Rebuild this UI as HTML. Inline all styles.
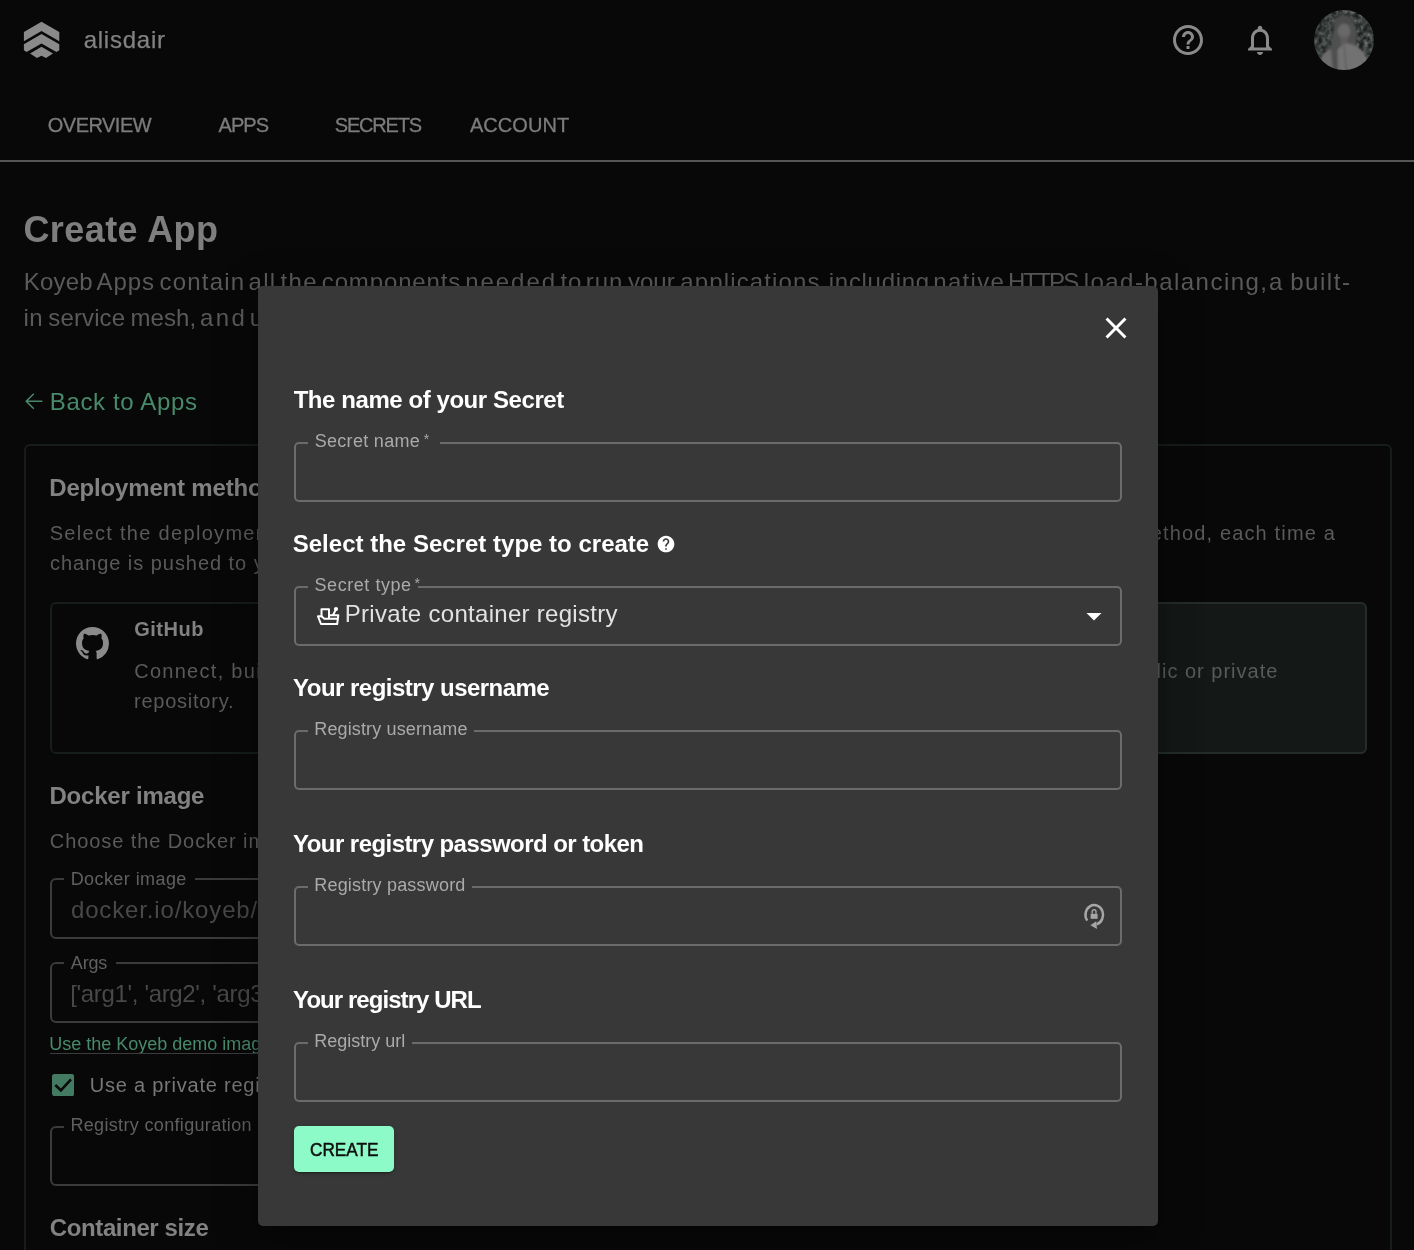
<!DOCTYPE html>
<html><head><meta charset="utf-8"><title>Create App</title>
<style>
html,body{margin:0;padding:0;}
body{width:1414px;height:1250px;overflow:hidden;background:#080808;font-family:"Liberation Sans",sans-serif;position:relative;}
#w{position:absolute;left:0;top:0;width:1414px;height:1250px;overflow:hidden;will-change:transform;}
.a{position:absolute;display:block;}
.t{position:absolute;white-space:nowrap;line-height:1;}
</style></head><body><div id="w">
<svg class="a" style="left:20px;top:18px" width="44" height="44" viewBox="20 18 44 44">
<g fill="#8a8a8a">
<path d="M41.5 21.8 L59.3 31.9 V41.2 L41.5 31 L23.9 41.2 V31.9 Z"/>
<path d="M41.5 34 L59.3 44.2 V50.3 L56.4 52 L41.5 43.4 L26.6 52 L23.9 50.3 V44.2 Z"/>
<path d="M41.5 46.7 L53 53.4 L46 58.1 L41.5 55.7 L36.9 58.1 L30.1 53.4 Z"/>
</g></svg>
<div class="t" style="left:83.68px;top:28px;font-size:24px;color:#828282;letter-spacing:0.760px;-webkit-text-stroke:0.25px #828282;">alisdair</div>
<div class="t" style="left:47.82px;top:115px;font-size:20px;color:#7c7c7c;letter-spacing:-0.525px;-webkit-text-stroke:0.3px #7c7c7c;">OVERVIEW</div>
<div class="t" style="left:218.50px;top:115px;font-size:20px;color:#7c7c7c;letter-spacing:-0.925px;-webkit-text-stroke:0.3px #7c7c7c;">APPS</div>
<div class="t" style="left:334.86px;top:115px;font-size:20px;color:#7c7c7c;letter-spacing:-1.212px;-webkit-text-stroke:0.3px #7c7c7c;">SECRETS</div>
<div class="t" style="left:469.96px;top:115px;font-size:20px;color:#7c7c7c;letter-spacing:0.059px;-webkit-text-stroke:0.3px #7c7c7c;">ACCOUNT</div>
<div class="a" style="left:0;top:160px;width:1414px;height:2px;background:#565656"></div>
<svg class="a" style="left:1170px;top:22px" width="36" height="36" viewBox="0 0 24 24"><path fill="#8a8a8a" d="M11 18h2v-2h-2v2zm1-16C6.48 2 2 6.48 2 12s4.48 10 10 10 10-4.48 10-10S17.52 2 12 2zm0 18c-4.41 0-8-3.59-8-8s3.59-8 8-8 8 3.59 8 8-3.59 8-8 8zm0-14c-2.21 0-4 1.79-4 4h2c0-1.1.9-2 2-2s2 .9 2 2c0 2-3 1.75-3 5h2c0-2.25 3-2.5 3-5 0-2.21-1.79-4-4-4z"/></svg>
<svg class="a" style="left:1242px;top:22px" width="36" height="36" viewBox="0 0 24 24"><path fill="#8a8a8a" d="M12 22c1.1 0 2-.9 2-2h-4c0 1.1.9 2 2 2zm6-6v-5c0-3.07-1.63-5.64-4.5-6.32V4c0-.83-.67-1.5-1.5-1.5s-1.5.67-1.5 1.5v.68C7.64 5.36 6 7.92 6 11v5l-2 2v1h16v-1l-2-2zm-2 1H8v-6c0-2.48 1.51-4.5 4-4.5s4 2.02 4 4.5v6z"/></svg>
<svg class="a" style="left:1314px;top:10px" width="60" height="60" viewBox="0 0 60 60">
<defs><clipPath id="avc"><circle cx="30" cy="30" r="30"/></clipPath><filter id="avb" x="-10%" y="-10%" width="120%" height="120%"><feGaussianBlur stdDeviation="0.8"/></filter>
<filter id="avn" x="0" y="0" width="100%" height="100%"><feTurbulence type="fractalNoise" baseFrequency="0.22" numOctaves="2" seed="7"/><feColorMatrix type="matrix" values="0 0 0 0 0.24  0 0 0 0 0.26  0 0 0 0 0.25  0.9 0.9 0 0 -0.62"/></filter></defs>
<g clip-path="url(#avc)"><rect width="60" height="60" fill="#1b1f1e"/>
<rect width="60" height="60" filter="url(#avn)"/>
<g filter="url(#avb)">
<ellipse cx="30" cy="16.5" rx="10.5" ry="11.5" fill="#4c4c4c"/>
<path d="M20 18 C17 30 15 44 17 62 L44 62 L42 30 C44 24 42 16 40 14 Z" fill="#4f4f4f"/>
<ellipse cx="30" cy="21" rx="6.4" ry="7.4" fill="#676767"/>
<rect x="26.5" y="27" width="7.5" height="8" fill="#5c5c5c"/>
<path d="M5 62 C5 48 9 41 17 39 L19 62 Z" fill="#6c6c6c"/>
<path d="M24 62 L23.5 40 C27 35 30 34 34 33.5 C44 35 52 42 55 54 L55 62 Z" fill="#727272"/>
<path d="M30 36 L32.5 62" stroke="#5a5a5a" stroke-width="1.2" fill="none"/>
</g></g></svg>
<div class="t" style="left:23.38px;top:212px;font-size:36px;color:#7e7e7e;letter-spacing:0.436px;font-weight:700;">Create App</div>
<div class="t" style="left:23.84px;top:270px;font-size:24px;color:#5a5a5a;letter-spacing:0.158px;">Koyeb</div>
<div class="t" style="left:96.55px;top:270px;font-size:24px;color:#5a5a5a;letter-spacing:0.916px;">Apps</div>
<div class="t" style="left:159.43px;top:270px;font-size:24px;color:#5a5a5a;letter-spacing:1.215px;">contain</div>
<div class="t" style="left:248.57px;top:270px;font-size:24px;color:#5a5a5a;letter-spacing:1.289px;">all</div>
<div class="t" style="left:280.54px;top:270px;font-size:24px;color:#5a5a5a;letter-spacing:1.362px;">the</div>
<div class="t" style="left:321.80px;top:270px;font-size:24px;color:#5a5a5a;letter-spacing:0.864px;">components</div>
<div class="t" style="left:465.16px;top:270px;font-size:24px;color:#5a5a5a;letter-spacing:1.973px;">needed</div>
<div class="t" style="left:560.54px;top:270px;font-size:24px;color:#5a5a5a;letter-spacing:0.727px;">to</div>
<div class="t" style="left:585.87px;top:270px;font-size:24px;color:#5a5a5a;letter-spacing:0.891px;">run</div>
<div class="t" style="left:627.90px;top:270px;font-size:24px;color:#5a5a5a;letter-spacing:0.042px;">your</div>
<div class="t" style="left:680.36px;top:270px;font-size:24px;color:#5a5a5a;letter-spacing:1.119px;">applications,</div>
<div class="t" style="left:828.82px;top:270px;font-size:24px;color:#5a5a5a;letter-spacing:0.693px;">including</div>
<div class="t" style="left:933.29px;top:270px;font-size:24px;color:#5a5a5a;letter-spacing:1.300px;">native</div>
<div class="t" style="left:1008.00px;top:270px;font-size:24px;color:#5a5a5a;letter-spacing:-1.881px;">HTTPS</div>
<div class="t" style="left:1083.65px;top:270px;font-size:24px;color:#5a5a5a;letter-spacing:1.470px;">load-balancing,</div>
<div class="t" style="left:1268.90px;top:270px;font-size:24px;color:#5a5a5a;">a</div>
<div class="t" style="left:1290.13px;top:270px;font-size:24px;color:#5a5a5a;letter-spacing:1.569px;">built-</div>
<div class="t" style="left:23.48px;top:306px;font-size:24px;color:#5a5a5a;letter-spacing:0.381px;">in</div>
<div class="t" style="left:48.36px;top:306px;font-size:24px;color:#5a5a5a;letter-spacing:0.115px;">service</div>
<div class="t" style="left:130.49px;top:306px;font-size:24px;color:#5a5a5a;letter-spacing:0.056px;">mesh,</div>
<div class="t" style="left:200.11px;top:306px;font-size:24px;color:#5a5a5a;letter-spacing:2.399px;">and</div>
<div class="t" style="left:249.83px;top:306px;font-size:24px;color:#5a5a5a;letter-spacing:0.500px;">up to date</div>
<svg class="a" style="left:24px;top:391px" width="20" height="20" viewBox="0 0 20 20"><path d="M18.4 10.2 H2.2 M9.8 2.8 L2.2 10.2 L9.8 17.8" fill="none" stroke="#488a6c" stroke-width="1.5"/></svg>
<div class="t" style="left:49.79px;top:390px;font-size:24px;color:#488a6c;letter-spacing:0.648px;">Back to Apps</div>
<div class="a" style="left:24px;top:444px;width:1368px;height:900px;border:2px solid #161c1a;border-radius:6px;box-sizing:border-box"></div>
<div class="t" style="left:49.27px;top:476px;font-size:24px;color:#828282;letter-spacing:-0.177px;font-weight:700;">Deployment method</div>
<div class="t" style="left:49.65px;top:523px;font-size:20px;color:#5a5a5a;letter-spacing:1.313px;">Select the deployment method</div>
<div class="t" style="left:50.00px;top:553px;font-size:20px;color:#5a5a5a;letter-spacing:0.956px;">change is pushed to your</div>
<div class="t" style="left:1219.90px;top:523px;font-size:20px;color:#5a5a5a;letter-spacing:1.158px;">each time a</div>
<div class="t" style="right:194.10px;top:523px;font-size:20px;color:#5a5a5a;letter-spacing:1.158px;">method, </div>
<div class="a" style="left:50px;top:602px;width:645px;height:152px;border:2px solid #161d1b;border-radius:6px;box-sizing:border-box"></div>
<div class="a" style="left:721px;top:602px;width:646px;height:152px;border:2px solid #242d2a;background:#141918;border-radius:6px;box-sizing:border-box"></div>
<svg class="a" style="left:75.5px;top:627.2px" width="33" height="33" viewBox="0 0 16 16"><path fill="#8a8a8a" d="M8 0C3.58 0 0 3.58 0 8c0 3.54 2.29 6.53 5.47 7.59.4.07.55-.17.55-.38 0-.19-.01-.82-.01-1.49-2.01.37-2.53-.49-2.69-.94-.09-.23-.48-.94-.82-1.13-.28-.15-.68-.52-.01-.53.63-.01 1.08.58 1.23.82.72 1.21 1.87.87 2.33.66.07-.52.28-.87.51-1.07-1.78-.2-3.64-.89-3.64-3.95 0-.87.31-1.59.82-2.15-.08-.2-.36-1.02.08-2.12 0 0 .67-.21 2.2.82.64-.18 1.32-.27 2-.27s1.36.09 2 .27c1.53-1.04 2.2-.82 2.2-.82.44 1.1.16 1.92.08 2.12.51.56.82 1.27.82 2.15 0 3.07-1.87 3.75-3.65 3.95.29.25.54.73.54 1.48 0 1.07-.01 1.93-.01 2.2 0 .21.15.46.55.38A8.01 8.01 0 0 0 16 8c0-4.42-3.58-8-8-8z"/></svg>
<div class="t" style="left:134.28px;top:619px;font-size:20px;color:#828282;letter-spacing:0.496px;font-weight:700;">GitHub</div>
<div class="t" style="left:134.16px;top:661px;font-size:20px;color:#5a5a5a;letter-spacing:1.284px;">Connect, build</div>
<div class="t" style="left:133.96px;top:691px;font-size:20px;color:#5a5a5a;letter-spacing:0.770px;">repository.</div>
<div class="t" style="left:1184.97px;top:661px;font-size:20px;color:#5a5a5a;letter-spacing:1.006px;">or private</div>
<div class="t" style="right:229.03px;top:661px;font-size:20px;color:#5a5a5a;letter-spacing:1.006px;">public </div>
<div class="t" style="left:49.49px;top:784px;font-size:24px;color:#828282;letter-spacing:-0.220px;font-weight:700;">Docker image</div>
<div class="t" style="left:49.77px;top:831px;font-size:20px;color:#5a5a5a;letter-spacing:0.922px;">Choose the Docker image</div>
<div class="a" style="left:50px;top:878px;width:500px;height:61px;border:2px solid #393c3a;border-radius:6px;box-sizing:border-box"></div>
<div class="a" style="left:64px;top:878px;width:130.5px;height:2px;background:#080808"></div>
<div class="t" style="left:70.70px;top:870px;font-size:18px;color:#606060;letter-spacing:0.418px;">Docker image</div>
<div class="t" style="left:70.96px;top:898px;font-size:24px;color:#484848;letter-spacing:0.854px;">docker.io/koyeb/demo</div>
<div class="a" style="left:50px;top:962px;width:500px;height:61px;border:2px solid #393c3a;border-radius:6px;box-sizing:border-box"></div>
<div class="a" style="left:64px;top:962px;width:51.6px;height:2px;background:#080808"></div>
<div class="t" style="left:70.81px;top:954px;font-size:18px;color:#606060;letter-spacing:-0.155px;">Args</div>
<div class="t" style="left:70.25px;top:982px;font-size:24px;color:#484848;letter-spacing:-0.336px;">[&#x27;arg1&#x27;, &#x27;arg2&#x27;, &#x27;arg3&#x27;]</div>
<div class="t" style="left:49.23px;top:1035px;font-size:18px;color:#488a6c;letter-spacing:0.002px;">Use the Koyeb demo image</div>
<div class="a" style="left:50px;top:1053px;width:220px;height:1px;background:#3c3c3c"></div>
<svg class="a" style="left:52px;top:1074px" width="22.2" height="22.2" viewBox="0 0 22.2 22.2"><rect width="22.2" height="22.2" rx="2.6" fill="#437a62"/><path d="M3.3 11 L8.9 16.3 L19 5.4" fill="none" stroke="#0b0b0b" stroke-width="2.6"/></svg>
<div class="t" style="left:89.70px;top:1075px;font-size:20px;color:#787878;letter-spacing:0.778px;">Use a private registry</div>
<div class="a" style="left:50px;top:1126px;width:500px;height:60px;border:2px solid #393c3a;border-radius:6px;box-sizing:border-box"></div>
<div class="a" style="left:64px;top:1126px;width:245.0px;height:2px;background:#080808"></div>
<div class="t" style="left:70.43px;top:1116px;font-size:18px;color:#606060;letter-spacing:0.335px;">Registry configuration secret</div>
<div class="t" style="left:49.78px;top:1216px;font-size:24px;color:#828282;letter-spacing:-0.383px;font-weight:700;">Container size</div>
<div class="a" style="left:258px;top:286px;width:900px;height:940px;background:#383838;border-radius:5px;box-shadow:0 11px 15px -7px rgba(0,0,0,0.2),0 24px 38px 3px rgba(0,0,0,0.14),0 9px 46px 8px rgba(0,0,0,0.12)"></div>
<svg class="a" style="left:1098px;top:310px" width="36" height="36" viewBox="0 0 24 24"><path fill="#fff" d="M19 6.41L17.59 5 12 10.59 6.41 5 5 6.41 10.59 12 5 17.59 6.41 19 12 13.41 17.59 19 19 17.59 13.41 12z"/></svg>
<div class="t" style="left:293.64px;top:388px;font-size:24px;color:#ffffff;letter-spacing:-0.432px;font-weight:700;">The name of your Secret</div>
<div class="a" style="left:294px;top:442px;width:828px;height:60px;border:2px solid #6b6b6b;border-radius:5px;box-sizing:border-box"></div>
<div class="a" style="left:308px;top:442px;width:132.0px;height:2px;background:#383838"></div>
<div class="t" style="left:314.63px;top:432px;font-size:18px;color:#aaaaaa;letter-spacing:0.316px;">Secret name</div>
<div class="t" style="left:423.70px;top:432px;font-size:14px;color:#aaaaaa;">*</div>
<div class="t" style="left:292.73px;top:532px;font-size:24px;color:#ffffff;letter-spacing:0.011px;font-weight:700;">Select the Secret type to create</div>
<svg class="a" style="left:656px;top:533.9px" width="20" height="20" viewBox="0 0 24 24"><path fill="#fff" d="M12 2C6.48 2 2 6.48 2 12s4.48 10 10 10 10-4.48 10-10S17.52 2 12 2zm1 17h-2v-2h2v2zm2.07-7.75l-.9.92C13.45 12.9 13 13.5 13 15h-2v-.5c0-1.1.45-2.1 1.17-2.83l1.24-1.26c.37-.36.59-.86.59-1.41 0-1.1-.9-2-2-2s-2 .9-2 2H8c0-2.21 1.79-4 4-4s4 1.79 4 4c0 .88-.36 1.68-.93 2.25z"/></svg>
<div class="a" style="left:294px;top:586px;width:828px;height:60px;border:2px solid #6b6b6b;border-radius:5px;box-sizing:border-box"></div>
<div class="a" style="left:308px;top:586px;width:110.0px;height:2px;background:#383838"></div>
<div class="t" style="left:314.50px;top:576px;font-size:18px;color:#aaaaaa;letter-spacing:0.555px;">Secret type</div>
<div class="t" style="left:414.60px;top:576px;font-size:14px;color:#aaaaaa;">*</div>
<svg class="a" style="left:316px;top:604px" width="25" height="23" viewBox="0 0 25 23">
<g fill="none" stroke="#fff" stroke-width="2" stroke-linejoin="round" stroke-linecap="round">
<path d="M5.5 12.3 H2 L5 20 H21.2 L22.3 11.3 H13.5"/>
<path d="M5.5 12.3 V5.2 H13 V14"/>
<path d="M5.5 12.3 L8.3 14.7 H21"/>
<path d="M17.2 10.8 L19.5 6.2"/>
</g><circle cx="20" cy="5" r="2.1" fill="#fff"/></svg>
<div class="t" style="left:344.77px;top:602px;font-size:24px;color:#e2e2e2;letter-spacing:0.293px;">Private container registry</div>
<svg class="a" style="left:1076px;top:598px" width="36" height="36" viewBox="0 0 24 24"><path fill="#fff" d="M7 10l5 5 5-5z"/></svg>
<div class="t" style="left:293.12px;top:676px;font-size:24px;color:#ffffff;letter-spacing:-0.527px;font-weight:700;">Your registry username</div>
<div class="a" style="left:294px;top:730px;width:828px;height:60px;border:2px solid #6b6b6b;border-radius:5px;box-sizing:border-box"></div>
<div class="a" style="left:308px;top:730px;width:165.7px;height:2px;background:#383838"></div>
<div class="t" style="left:314.25px;top:720px;font-size:18px;color:#aaaaaa;letter-spacing:0.138px;">Registry username</div>
<div class="t" style="left:293.12px;top:832px;font-size:24px;color:#ffffff;letter-spacing:-0.561px;font-weight:700;">Your registry password or token</div>
<div class="a" style="left:294px;top:886px;width:828px;height:60px;border:2px solid #6b6b6b;border-radius:5px;box-sizing:border-box"></div>
<div class="a" style="left:308px;top:886px;width:164.0px;height:2px;background:#383838"></div>
<div class="t" style="left:314.25px;top:876px;font-size:18px;color:#aaaaaa;letter-spacing:0.189px;">Registry password</div>
<svg class="a" style="left:1082px;top:902px" width="24" height="30" viewBox="0 0 24 30">
<path d="M5.2 18.6 A8.8 9.7 0 1 1 14.6 22.2" fill="none" stroke="#a6a6a6" stroke-width="2.5"/>
<path d="M8.4 23.2 L14.2 19.2 L15 27 Z" fill="#a6a6a6"/>
<rect x="8.6" y="11.8" width="7" height="5" fill="#a6a6a6"/>
<path d="M10.2 11.8 V9.6 a1.9 1.9 0 0 1 3.8 0 V11.8" fill="none" stroke="#a6a6a6" stroke-width="1.4"/>
</svg>
<div class="t" style="left:293.12px;top:988px;font-size:24px;color:#ffffff;letter-spacing:-0.944px;font-weight:700;">Your registry URL</div>
<div class="a" style="left:294px;top:1042px;width:828px;height:60px;border:2px solid #6b6b6b;border-radius:5px;box-sizing:border-box"></div>
<div class="a" style="left:308px;top:1042px;width:103.8px;height:2px;background:#383838"></div>
<div class="t" style="left:314.25px;top:1032px;font-size:18px;color:#aaaaaa;letter-spacing:-0.007px;">Registry url</div>
<div class="a" style="left:294px;top:1126px;width:100px;height:46px;background:#8cfbc8;border-radius:5px;box-shadow:0 3px 1px -2px rgba(0,0,0,0.2),0 2px 2px 0 rgba(0,0,0,0.14),0 1px 5px 0 rgba(0,0,0,0.12)"></div>
<div class="t" style="left:309.90px;top:1140px;font-size:19px;color:#0e0e0e;-webkit-text-stroke:0.5px #0e0e0e;transform:scaleX(0.905);transform-origin:0 0;">CREATE</div>
</div></body></html>
